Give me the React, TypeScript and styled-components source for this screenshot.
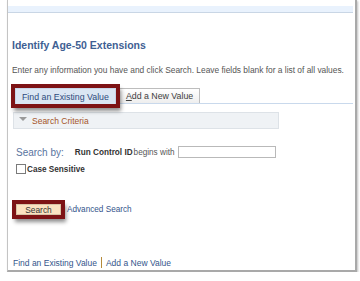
import React from 'react';
import styled, {createGlobalStyle} from 'styled-components';

const GlobalStyle = createGlobalStyle`
  html, body {
    margin: 0;
    padding: 0;
    background: #ffffff;
  }
  body {
    font-family: 'Liberation Sans', Arial, sans-serif;
    color: #333;
  }
`;

const red = '#7d1315';

const Frame = styled.div`
  box-sizing: border-box;
  margin-left: 7px;
  width: 350px;
  height: 272px;
  border-left: 1px solid #c4c4c4;
  border-right: 2px solid #a9a9a9;
  border-bottom: 2px solid #a9a9a9;
  box-shadow: 1px 1px 2px rgba(0, 0, 0, 0.25);
  display: flex;
  flex-direction: column;
`;

const Band = styled.div`
  margin-top: 6px;
  margin-right: 2px;
  height: 6px;
  background: #e9f2fd;
  border-bottom: 1px solid #c9d6e5;
`;

const Content = styled.div`
  padding-left: 4px;
  display: flex;
  flex-direction: column;
`;

const Title = styled.h1`
  margin: 26px 0 0;
  font-size: 10.5px;
  line-height: 12px;
  font-weight: bold;
  color: #3f5f93;
`;

const Intro = styled.p`
  margin: 14px 0 0;
  font-size: 8.4px;
  line-height: 10px;
  color: #555;
`;

const TabBar = styled.div`
  margin: 13px 2px 0 0;
  display: flex;
  gap: 3px;
  padding-left: 3px;
  border-bottom: 1px solid #c9d9ec;
`;

const Tab = styled.div<{$active?: boolean}>`
  box-sizing: border-box;
  height: 15px;
  padding: 0 6px;
  display: flex;
  align-items: center;
  font-size: 8.8px;
  border: 1px solid ${(p) => (p.$active ? '#c6d5e8' : '#bdbdbd')};
  border-bottom: none;
  background: ${(p) =>
    p.$active ? '#dbe6f3' : 'linear-gradient(#ffffff, #eeeeee)'};
  color: ${(p) => (p.$active ? '#2f4c7c' : '#404040')};
  position: relative;
  ${(p) =>
    p.$active &&
    `box-shadow: 0 0 0 4px ${red}, 2px 4px 4px 3px rgba(0,0,0,0.45);
     z-index: 1;
     margin-bottom: -1px;
     height: 16px;`}

  u {
    text-decoration: underline;
  }
`;

const Criteria = styled.div`
  box-sizing: border-box;
  margin: 8px 0 0 1px;
  width: 266px;
  height: 17px;
  background: #eff2f5;
  border: 1px solid #dde2e7;
  display: flex;
  align-items: center;
  gap: 5px;
  padding-left: 5px;
  font-size: 8.5px;
  color: #a5552a;
`;

const Triangle = styled.span`
  width: 0;
  height: 0;
  border-left: 4px solid transparent;
  border-right: 4px solid transparent;
  border-top: 4px solid #9a9a9a;
  margin-top: -3px;
`;

const SearchRow = styled.div`
  margin: 17px 0 0 4px;
  display: flex;
  align-items: center;
  height: 12px;
`;

const SearchBy = styled.span`
  font-size: 10px;
  color: #5a74a0;
  margin-right: 11px;
`;

const FieldLabel = styled.span`
  font-size: 8.2px;
  font-weight: bold;
  color: #333;
  margin-right: 1px;
`;

const Operator = styled.span`
  font-size: 8.2px;
  color: #555;
  margin-right: 3px;
`;

const TextInput = styled.div`
  box-sizing: border-box;
  width: 98px;
  height: 12px;
  border: 1px solid #b9b9b9;
  background: #fff;
`;

const CheckRow = styled.div`
  margin: 6px 0 0 4px;
  display: flex;
  align-items: center;
  gap: 1px;
`;

const Check = styled.span`
  box-sizing: border-box;
  width: 10px;
  height: 10px;
  border: 1px solid #7a7a7a;
  background: #fff;
`;

const CheckLabel = styled.span`
  font-size: 8.2px;
  font-weight: bold;
  color: #333;
`;

const ActionRow = styled.div`
  margin: 30px 0 0 4px;
  display: flex;
  align-items: center;
  gap: 6px;
`;

const SearchButton = styled.div`
  box-sizing: border-box;
  width: 45px;
  height: 11px;
  display: flex;
  align-items: center;
  justify-content: center;
  background: #fbe2c1;
  border: 1px solid #d8c3a5;
  font-size: 8.4px;
  color: #333;
  box-shadow: 0 0 0 4px ${red}, 2px 4px 4px 3px rgba(0, 0, 0, 0.45);
`;

const Link = styled.span`
  font-size: 8.2px;
  color: #34558b;
`;

const Footer = styled.div`
  margin: 42px 0 0 1px;
  display: flex;
  align-items: center;
  gap: 4px;
`;

const FooterLink = styled.span`
  font-size: 8.5px;
  color: #34558b;
`;

const Divider = styled.span`
  width: 1px;
  height: 11px;
  background: #b58a3a;
`;

export default function App() {
  return (
    <>
      <GlobalStyle />
      <Frame>
        <Band />
        <Content>
          <Title>Identify Age-50 Extensions</Title>
          <Intro>
            Enter any information you have and click Search. Leave fields blank for a list of all values.
          </Intro>
          <TabBar>
            <Tab $active>Find an Existing Value</Tab>
            <Tab>
              <span>
                <u>A</u>dd a New Value
              </span>
            </Tab>
          </TabBar>
          <Criteria>
            <Triangle />
            Search Criteria
          </Criteria>
          <SearchRow>
            <SearchBy>Search by:</SearchBy>
            <FieldLabel>Run Control ID</FieldLabel>
            <Operator>begins with</Operator>
            <TextInput />
          </SearchRow>
          <CheckRow>
            <Check />
            <CheckLabel>Case Sensitive</CheckLabel>
          </CheckRow>
          <ActionRow>
            <SearchButton>Search</SearchButton>
            <Link>Advanced Search</Link>
          </ActionRow>
          <Footer>
            <FooterLink>Find an Existing Value</FooterLink>
            <Divider />
            <FooterLink>Add a New Value</FooterLink>
          </Footer>
        </Content>
      </Frame>
    </>
  );
}
